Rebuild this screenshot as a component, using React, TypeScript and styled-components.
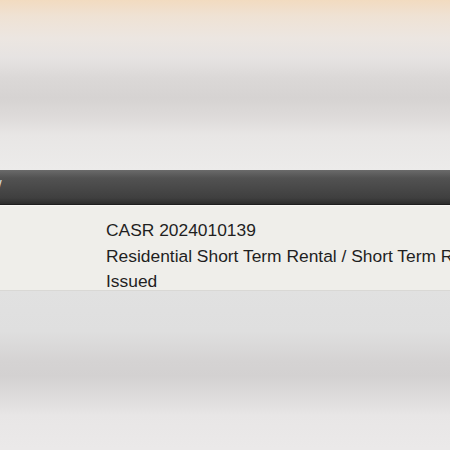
import React from "react";
import styled, { createGlobalStyle } from "styled-components";

const GlobalStyle = createGlobalStyle`
  html, body {
    margin: 0;
    padding: 0;
    background: #e6e4e3;
  }
`;

const Page = styled.div`
  width: 450px;
  height: 450px;
  overflow: hidden;
  display: flex;
  flex-direction: column;
  font-family: "Liberation Sans", Arial, sans-serif;
`;

const TopHaze = styled.div`
  height: 170px;
  flex-shrink: 0;
  background: linear-gradient(
    to bottom,
    #f2dbc0 0px,
    #efe2d4 16px,
    #ece6e1 38px,
    #e6e3e2 58px,
    #dbd8d7 78px,
    #d6d3d2 98px,
    #dedbda 118px,
    #e8e6e5 135px,
    #ecebea 170px
  );
`;

const HeaderBar = styled.div`
  height: 34px;
  flex-shrink: 0;
  display: flex;
  align-items: center;
  background: linear-gradient(to bottom, #6a6a6a 0px, #525252 8px, #3f3f3f 28px, #2c2c2c 34px);
  border-bottom: 1px solid #1e1e1e;
  color: #d8d8d8;
  font-size: 17px;
`;

const Crumb = styled.span`
  margin-left: -3px;
`;

const Card = styled.div`
  height: 86px;
  flex-shrink: 0;
  box-sizing: border-box;
  padding: 12px 0 0 106px;
  background: #efeeea;
  border-top: 1px solid #f7f6f3;
  border-bottom: 1px solid #d9d8d5;
  display: flex;
  flex-direction: column;
`;

const Line = styled.div`
  font-size: 17.4px;
  line-height: 25.5px;
  color: #1f1f1f;
  white-space: nowrap;
`;

const BottomHaze = styled.div`
  flex: 1;
  background: linear-gradient(
    to bottom,
    #e1e1e1 0px,
    #dfdfdf 40px,
    #d5d3d3 70px,
    #d3d1d1 85px,
    #dddbdb 105px,
    #e8e6e6 125px,
    #ebe9e9 157px
  );
`;

export default function App() {
  return (
    <>
      <GlobalStyle />
      <Page>
        <TopHaze />
        <HeaderBar>
          <Crumb>/</Crumb>
        </HeaderBar>
        <Card>
          <Line>CASR 2024010139</Line>
          <Line>Residential Short Term Rental / Short Term Rental Permit</Line>
          <Line>Issued</Line>
        </Card>
        <BottomHaze />
      </Page>
    </>
  );
}
